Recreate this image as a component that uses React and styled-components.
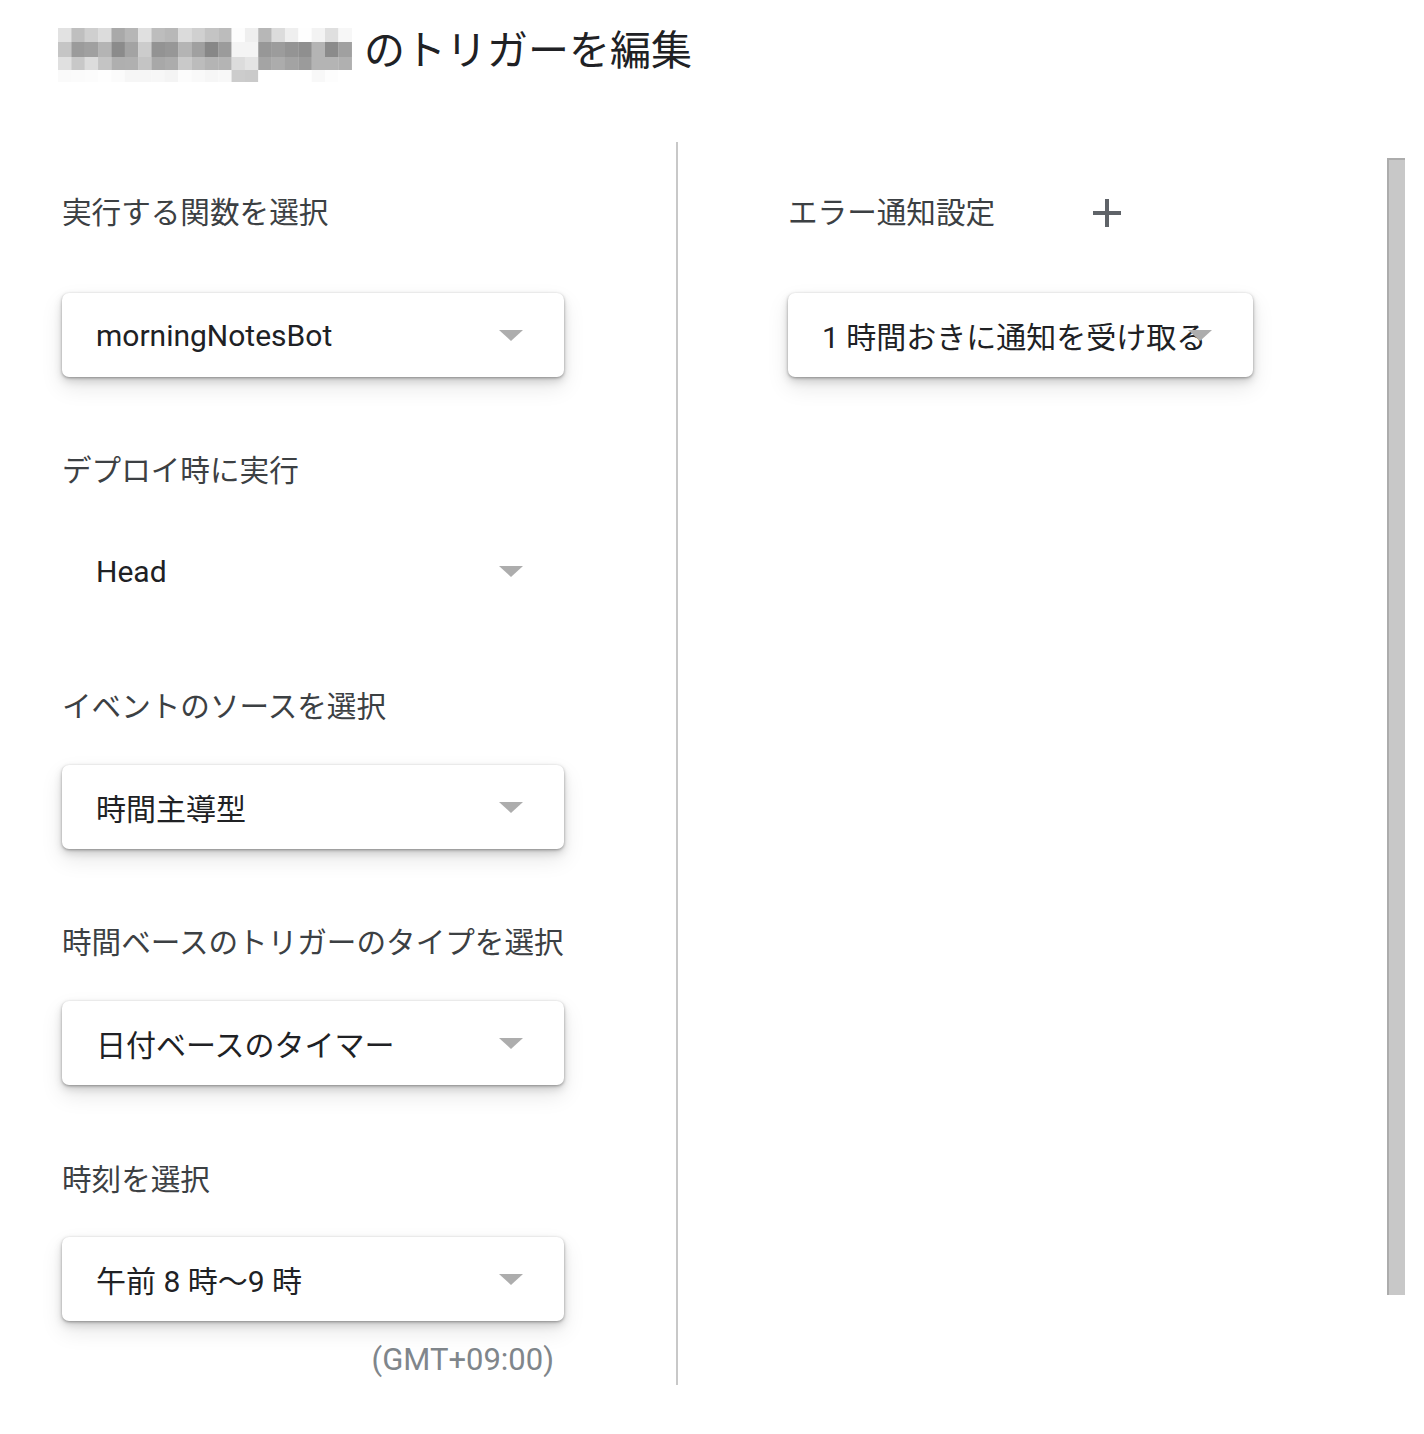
import React from 'react';
import styled, { createGlobalStyle } from 'styled-components';

const GlobalStyle = createGlobalStyle`
    html, body {
        margin: 0;
        padding: 0;
        background: #ffffff;
    }
    body {
        font-family: Roboto, "Noto Sans CJK JP", "Noto Sans", sans-serif;
        color: #202124;
    }
`;

const Page = styled.div`
    width: 1424px;
    min-height: 1434px;
    background: #ffffff;
`;

const Header = styled.div`
    display: flex;
    align-items: flex-start;
    gap: 12px;
    padding: 28px 0 0 58px;
    height: 142px;
    box-sizing: border-box;
`;

const Title = styled.h1`
    margin: 0;
    font-size: 41px;
    font-weight: 400;
    line-height: 46px;
    color: #202124;
    letter-spacing: 0;
`;

const Body = styled.div`
    display: flex;
    align-items: flex-start;
`;

const LeftColumn = styled.div`
    display: flex;
    flex-direction: column;
    width: 614px;
    padding: 51px 0 6px 62px;
    border-right: 2px solid #c8c8c8;
`;

const RightColumn = styled.div`
    flex: 1;
    display: flex;
    flex-direction: column;
    padding: 51px 0 0 110px;
`;

const Field = styled.div`
    display: flex;
    flex-direction: column;
    width: 502px;
    margin-bottom: ${(p) => p.$after}px;
`;

const LabelRow = styled.div`
    display: flex;
    align-items: center;
    height: 40px;
    margin-bottom: ${(p) => p.$gap}px;
`;

const Label = styled.div`
    font-size: 29.6px;
    line-height: 40px;
    color: #3c4043;
    white-space: nowrap;
`;

const Select = styled.div`
    position: relative;
    display: flex;
    align-items: center;
    width: ${(p) => p.$width || 502}px;
    height: 84px;
    box-sizing: border-box;
    padding-left: 34px;
    border-radius: 7px;
    background: #ffffff;
    box-shadow: ${(p) =>
        p.$flat
            ? 'none'
            : '0 1px 3px rgba(0,0,0,0.34), 0 4px 8px rgba(0,0,0,0.15), 0 10px 22px rgba(0,0,0,0.1)'};
`;

const SelectText = styled.span`
    font-size: 30px;
    color: #202124;
    white-space: nowrap;
`;

const Arrow = styled.span`
    position: absolute;
    right: 41px;
    top: 37px;
    width: 0;
    height: 0;
    border-left: 12px solid transparent;
    border-right: 12px solid transparent;
    border-top: 11px solid #adadad;
`;

const Hint = styled.div`
    align-self: flex-end;
    margin-top: 20px;
    padding-right: 10px;
    font-size: 31px;
    line-height: 38px;
    color: #80868b;
`;

const PlusButton = styled.span`
    display: flex;
    margin-left: 98px;
    width: 28px;
    height: 28px;
`;

const Scrollbar = styled.div`
    width: 16px;
    height: 1135px;
    margin: 16px 19px 0 0;
    background: #c8c8c8;
    border-left: 2px solid #acacac;
    border-top: 2px solid #acacac;
`;

const mosaic = [
    ['e2', 'bf', 'cf', 'dc', 'a9', 'b6', 'e0', 'bd', 'b8', 'db', 'd0', 'c4', 'bc', 'fd', 'ef', 'b7', 'dc', 'ef', 'fe', 'f3', 'df', 'f7'],
    ['c5', '9b', 'a0', 'b4', '8b', 'a3', 'cc', '93', '97', 'b4', 'a0', '87', '9b', 'f4', 'f4', '97', '9c', '94', '8f', 'b4', '8b', 'a0'],
    ['e0', 'c8', 'dc', 'c4', 'af', 'b0', 'c4', 'a8', 'ac', 'c9', 'bc', 'b4', 'b4', 'dc', 'e4', 'a4', 'ac', 'a3', '9b', 'b4', 'b4', 'b0'],
    ['fa', 'fb', 'fc', 'fe', 'fb', 'f6', 'f6', 'f7', 'f4', 'fc', 'f9', 'f6', 'f8', 'cc', 'ca', 'ff', 'ff', 'ff', 'ff', 'f8', 'fd', 'ff'],
];
const rowHeights = [14, 15, 13, 12];

function Mosaic() {
    let y = 0;
    return (
        <svg width="294" height="54" viewBox="0 0 294 54" style={{ flexShrink: 0 }}>
            {mosaic.map((row, r) => {
                const top = y;
                y += rowHeights[r];
                return row.map((c, i) => (
                    <rect
                        key={`${r}-${i}`}
                        x={i * 13.35}
                        y={top}
                        width="13.6"
                        height={rowHeights[r]}
                        fill={`#${c}${c}${c}`}
                    />
                ));
            })}
        </svg>
    );
}

const fields = [
    { label: '実行する関数を選択', value: 'morningNotesBot', gap: 60, after: 74 },
    { label: 'デプロイ時に実行', value: 'Head', flat: true, gap: 38, after: 74 },
    { label: 'イベントのソースを選択', value: '時間主導型', gap: 38, after: 74 },
    { label: '時間ベースのトリガーのタイプを選択', value: '日付ベースのタイマー', gap: 38, after: 75 },
    { label: '時刻を選択', value: '午前 8 時～9 時', gap: 37, after: 0 },
];

function App() {
    return (
        <Page>
            <GlobalStyle />
            <Header>
                <Mosaic />
                <Title>のトリガーを編集</Title>
            </Header>
            <Body>
                <LeftColumn>
                    {fields.map((f) => (
                        <Field key={f.label} $after={f.after}>
                            <LabelRow $gap={f.gap}>
                                <Label>{f.label}</Label>
                            </LabelRow>
                            <Select $flat={f.flat}>
                                <SelectText>{f.value}</SelectText>
                                <Arrow />
                            </Select>
                        </Field>
                    ))}
                    <Field $after={0}>
                        <Hint>(GMT+09:00)</Hint>
                    </Field>
                </LeftColumn>
                <RightColumn>
                    <Field $after={0}>
                        <LabelRow $gap={60}>
                            <Label>エラー通知設定</Label>
                            <PlusButton>
                                <svg width="28" height="28" viewBox="0 0 28 28">
                                    <rect x="12" y="0" width="4" height="28" fill="#5f6368" />
                                    <rect x="0" y="12" width="28" height="4" fill="#5f6368" />
                                </svg>
                            </PlusButton>
                        </LabelRow>
                        <Select $width={465}>
                            <SelectText>1 時間おきに通知を受け取る</SelectText>
                            <Arrow />
                        </Select>
                    </Field>
                </RightColumn>
                <Scrollbar />
            </Body>
        </Page>
    );
}

export default App;
